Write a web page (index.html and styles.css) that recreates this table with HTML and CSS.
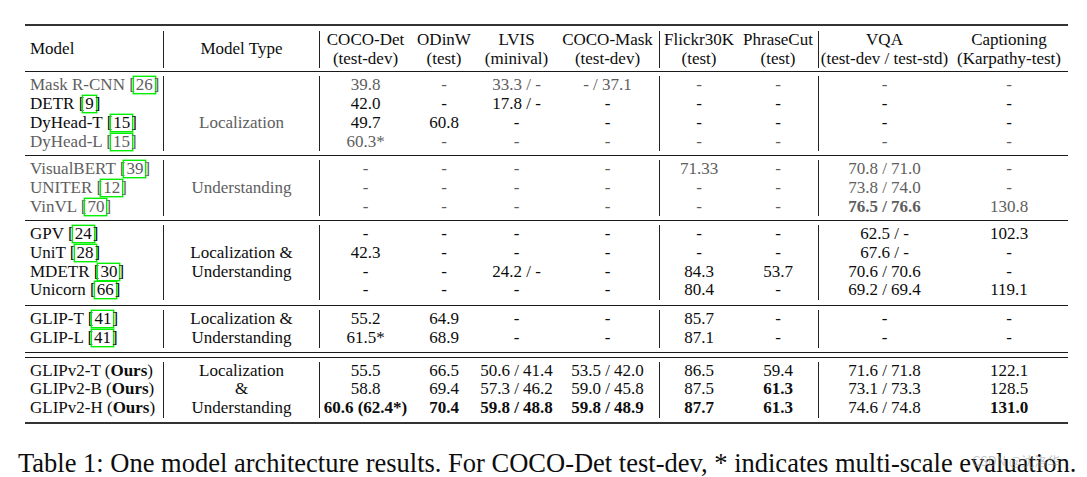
FILE: index.html
```html
<!DOCTYPE html>
<html>
<head>
<meta charset="utf-8">
<link rel="stylesheet" href="styles.css">
</head>
<body>
<div class="page">
<table class="results">
<colgroup>
<col class="c-model"><col class="c-type"><col class="c-det"><col class="c-odinw"><col class="c-lvis"><col class="c-mask"><col class="c-flickr"><col class="c-phrase"><col class="c-vqa"><col class="c-cap">
</colgroup>
<thead>
<tr class="rule thick"><td colspan="10"></td></tr>
<tr class="gap g5"><td colspan="10"></td></tr>
<tr class="head">
<td class="m">Model</td>
<td class="vl">Model Type</td>
<td class="vl">COCO-Det<br>(test-dev)</td>
<td>ODinW<br>(test)</td>
<td>LVIS<br>(minival)</td>
<td>COCO-Mask<br>(test-dev)</td>
<td class="vl">Flickr30K<br>(test)</td>
<td>PhraseCut<br>(test)</td>
<td class="vl">VQA<br>(test-dev / test-std)</td>
<td>Captioning<br>(Karpathy-test)</td>
</tr>
<tr class="gap g3"><td colspan="10"></td></tr>
</thead>
<tbody>
<tr class="rule"><td colspan="10"></td></tr>
<tr class="gap"><td colspan="10"></td></tr>
<tr class="row dim">
<td class="m">Mask R-CNN [<span class="cite">26</span>]</td>
<td class="vl"></td>
<td class="vl">39.8</td><td>-</td><td>33.3 / -</td><td>- / 37.1</td><td class="vl">-</td><td>-</td><td class="vl">-</td><td>-</td>
</tr>
<tr class="row">
<td class="m">DETR [<span class="cite">9</span>]</td>
<td class="vl"></td>
<td class="vl">42.0</td><td>-</td><td>17.8 / -</td><td>-</td><td class="vl">-</td><td>-</td><td class="vl">-</td><td>-</td>
</tr>
<tr class="row">
<td class="m">DyHead-T [<span class="cite">15</span>]</td>
<td class="vl dim">Localization</td>
<td class="vl">49.7</td><td>60.8</td><td>-</td><td>-</td><td class="vl">-</td><td>-</td><td class="vl">-</td><td>-</td>
</tr>
<tr class="row dim">
<td class="m">DyHead-L [<span class="cite">15</span>]</td>
<td class="vl"></td>
<td class="vl">60.3*</td><td>-</td><td>-</td><td>-</td><td class="vl">-</td><td>-</td><td class="vl">-</td><td>-</td>
</tr>
<tr class="gap"><td colspan="10"></td></tr>
</tbody>
<tbody class="dim">
<tr class="rule"><td colspan="10"></td></tr>
<tr class="gap"><td colspan="10"></td></tr>
<tr class="row">
<td class="m">VisualBERT [<span class="cite">39</span>]</td>
<td class="vl" rowspan="3">Understanding</td>
<td class="vl">-</td><td>-</td><td>-</td><td>-</td><td class="vl">71.33</td><td>-</td><td class="vl">70.8 / 71.0</td><td>-</td>
</tr>
<tr class="row">
<td class="m">UNITER [<span class="cite">12</span>]</td>
<td class="vl">-</td><td>-</td><td>-</td><td>-</td><td class="vl">-</td><td>-</td><td class="vl">73.8 / 74.0</td><td>-</td>
</tr>
<tr class="row">
<td class="m">VinVL [<span class="cite">70</span>]</td>
<td class="vl">-</td><td>-</td><td>-</td><td>-</td><td class="vl">-</td><td>-</td><td class="vl b">76.5 / 76.6</td><td>130.8</td>
</tr>
<tr class="gap"><td colspan="10"></td></tr>
</tbody>
<tbody>
<tr class="rule"><td colspan="10"></td></tr>
<tr class="gap"><td colspan="10"></td></tr>
<tr class="row">
<td class="m">GPV [<span class="cite">24</span>]</td>
<td class="vl" rowspan="4">Localization &amp;<br>Understanding</td>
<td class="vl">-</td><td>-</td><td>-</td><td>-</td><td class="vl">-</td><td>-</td><td class="vl">62.5 / -</td><td>102.3</td>
</tr>
<tr class="row">
<td class="m">UniT [<span class="cite">28</span>]</td>
<td class="vl">42.3</td><td>-</td><td>-</td><td>-</td><td class="vl">-</td><td>-</td><td class="vl">67.6 / -</td><td>-</td>
</tr>
<tr class="row">
<td class="m">MDETR [<span class="cite">30</span>]</td>
<td class="vl">-</td><td>-</td><td>24.2 / -</td><td>-</td><td class="vl">84.3</td><td>53.7</td><td class="vl">70.6 / 70.6</td><td>-</td>
</tr>
<tr class="row">
<td class="m">Unicorn [<span class="cite">66</span>]</td>
<td class="vl">-</td><td>-</td><td>-</td><td>-</td><td class="vl">80.4</td><td>-</td><td class="vl">69.2 / 69.4</td><td>119.1</td>
</tr>
<tr class="gap g5"><td colspan="10"></td></tr>
</tbody>
<tbody>
<tr class="rule"><td colspan="10"></td></tr>
<tr class="gap"><td colspan="10"></td></tr>
<tr class="row">
<td class="m">GLIP-T [<span class="cite">41</span>]</td>
<td class="vl" rowspan="2">Localization &amp;<br>Understanding</td>
<td class="vl">55.2</td><td>64.9</td><td>-</td><td>-</td><td class="vl">85.7</td><td>-</td><td class="vl">-</td><td>-</td>
</tr>
<tr class="row">
<td class="m">GLIP-L [<span class="cite">41</span>]</td>
<td class="vl">61.5*</td><td>68.9</td><td>-</td><td>-</td><td class="vl">87.1</td><td>-</td><td class="vl">-</td><td>-</td>
</tr>
<tr class="gap"><td colspan="10"></td></tr>
</tbody>
<tbody>
<tr class="rule"><td colspan="10"></td></tr>
<tr class="gap"><td colspan="10"></td></tr>
<tr class="rule"><td colspan="10"></td></tr>
<tr class="gap"><td colspan="10"></td></tr>
<tr class="row">
<td class="m">GLIPv2-T (<b>Ours</b>)</td>
<td class="vl">Localization</td>
<td class="vl">55.5</td><td>66.5</td><td>50.6 / 41.4</td><td>53.5 / 42.0</td><td class="vl">86.5</td><td>59.4</td><td class="vl">71.6 / 71.8</td><td>122.1</td>
</tr>
<tr class="row">
<td class="m">GLIPv2-B (<b>Ours</b>)</td>
<td class="vl">&amp;</td>
<td class="vl">58.8</td><td>69.4</td><td>57.3 / 46.2</td><td>59.0 / 45.8</td><td class="vl">87.5</td><td class="b">61.3</td><td class="vl">73.1 / 73.3</td><td>128.5</td>
</tr>
<tr class="row">
<td class="m">GLIPv2-H (<b>Ours</b>)</td>
<td class="vl">Understanding</td>
<td class="vl b">60.6 (62.4*)</td><td class="b">70.4</td><td class="b">59.8 / 48.8</td><td class="b">59.8 / 48.9</td><td class="vl b">87.7</td><td class="b">61.3</td><td class="vl">74.6 / 74.8</td><td class="b">131.0</td>
</tr>
<tr class="gap"><td colspan="10"></td></tr>
<tr class="rule thick"><td colspan="10"></td></tr>
</tbody>
</table>
<p class="caption">Table 1: One model architecture results. For COCO-Det test-dev, * indicates multi-scale evaluation.</p>
<span class="watermark">CSDN @沈洛华</span>
</div>
</body>
</html>
```
FILE: styles.css
```css
html, body {
  margin: 0;
  padding: 0;
  background: #fff;
}
.page {
  position: relative;
  width: 1087px;
  height: 477px;
  overflow: hidden;
  padding-top: 24px;
  box-sizing: border-box;
  font-family: "Liberation Serif", "Times New Roman", serif;
  color: #0d0d0d;
}
.results {
  margin-left: 25px;
  width: 1043px;
  table-layout: fixed;
  border-collapse: separate;
  border-spacing: 0;
  font-size: 17px;
  line-height: 18.7px;
}
.c-model { width: 138px; }
.c-type { width: 156px; }
.c-det { width: 92px; }
.c-odinw { width: 66px; }
.c-lvis { width: 79px; }
.c-mask { width: 103px; }
.c-flickr { width: 79px; }
.c-phrase { width: 80px; }
.c-vqa { width: 132px; }
.c-cap { width: 118px; }

.results td {
  padding: 0;
  text-align: center;
  white-space: nowrap;
  vertical-align: middle;
}
.results td.m {
  text-align: left;
  padding-left: 5px;
}
.results td.vl {
  border-left: 1px solid #222;
}
.rule td {
  height: 1px;
  background: #1a1a1a;
  font-size: 0;
  line-height: 0;
}
.rule.thick td {
  height: 2px;
  background: #333;
}
.gap td {
  height: 4px;
  font-size: 0;
  line-height: 0;
}
.gap.g5 td { height: 5px; }
.gap.g3 td { height: 3px; }

.dim, .dim td, .results td.dim { color: #5e5e5e; }
.b, b { font-weight: bold; }

.cite {
  display: inline-block;
  line-height: 16px;
  padding: 0 2px;
  margin: 0 -2px 0 -2px;
  border: 1px solid #00f000;
  box-shadow: 0 0 0 0.4px #00f000;
}

.caption {
  margin: 24px 0 0 18px;
  font-size: 26.5px;
  line-height: 30px;
  color: #0d0d0d;
  white-space: nowrap;
}
.watermark {
  position: absolute;
  left: 972px;
  top: 453px;
  font-family: "Noto Sans CJK SC", "Liberation Sans", sans-serif;
  font-size: 13px;
  line-height: 16px;
  color: rgba(150, 150, 150, 0.55);
}
```
